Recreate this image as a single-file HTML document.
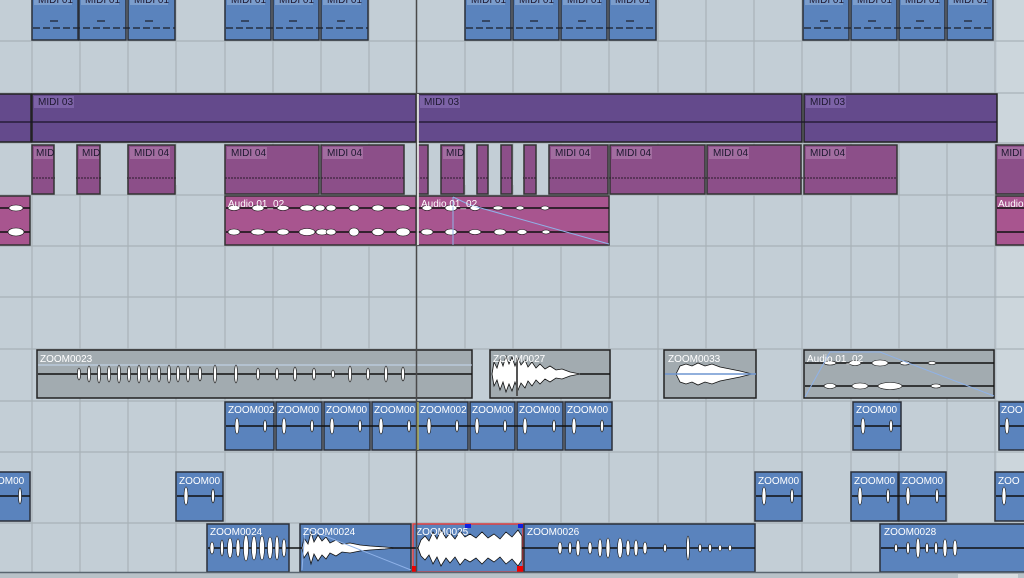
<!DOCTYPE html><html><head><meta charset="utf-8"><style>
html,body{margin:0;padding:0;background:#c3ced6;overflow:hidden}
svg{display:block}
text{font-family:"Liberation Sans",sans-serif;font-size:10px}
.b{fill:#5a83bd;stroke:#2a2f38;stroke-width:1.5}
.p3{fill:#644a8c;stroke:#222;stroke-width:1.5}
.p4{fill:#8c4f89;stroke:#333;stroke-width:1.5}
.a{fill:#a8558f;stroke:#333;stroke-width:1.5}
.g{fill:#a2abb0;stroke:#222;stroke-width:1.5}
.wl{fill:#fff;font-size:10px}
.dl{fill:#1e1830}
.ln{stroke:#111;stroke-width:1.5}
.blob{fill:#fff;stroke:#111;stroke-width:.6}
</style></head><body>
<svg width="1024" height="578" viewBox="0 0 1024 578" xmlns="http://www.w3.org/2000/svg">
<rect x="0" y="0" width="1024" height="578" fill="#c3ced6"/>
<rect x="997" y="0" width="27" height="578" fill="#ccd6dc"/>
<g stroke="#a9b2b8" stroke-width="1.2">
<line x1="32" y1="0" x2="32" y2="572"/><line x1="80" y1="0" x2="80" y2="572"/><line x1="128" y1="0" x2="128" y2="572"/><line x1="176" y1="0" x2="176" y2="572"/><line x1="225" y1="0" x2="225" y2="572"/><line x1="273" y1="0" x2="273" y2="572"/><line x1="321" y1="0" x2="321" y2="572"/><line x1="369" y1="0" x2="369" y2="572"/><line x1="465" y1="0" x2="465" y2="572"/><line x1="513" y1="0" x2="513" y2="572"/><line x1="561" y1="0" x2="561" y2="572"/><line x1="609" y1="0" x2="609" y2="572"/><line x1="658" y1="0" x2="658" y2="572"/><line x1="706" y1="0" x2="706" y2="572"/><line x1="754" y1="0" x2="754" y2="572"/><line x1="802" y1="0" x2="802" y2="572"/><line x1="851" y1="0" x2="851" y2="572"/><line x1="899" y1="0" x2="899" y2="572"/><line x1="947" y1="0" x2="947" y2="572"/><line x1="995" y1="0" x2="995" y2="572"/>
<line x1="0" y1="41" x2="1024" y2="41"/><line x1="0" y1="93" x2="1024" y2="93"/><line x1="0" y1="143" x2="1024" y2="143"/><line x1="0" y1="195" x2="1024" y2="195"/><line x1="0" y1="246" x2="1024" y2="246"/><line x1="0" y1="297" x2="1024" y2="297"/><line x1="0" y1="349" x2="1024" y2="349"/><line x1="0" y1="401" x2="1024" y2="401"/><line x1="0" y1="452" x2="1024" y2="452"/><line x1="0" y1="523" x2="1024" y2="523"/>
</g>

<!-- Row 1 MIDI 01 -->
<g>
<rect class="b" x="32" y="-2" width="46" height="42"/><rect class="b" x="79" y="-2" width="47" height="42"/><rect class="b" x="128" y="-2" width="47" height="42"/>
<rect class="b" x="225" y="-2" width="46" height="42"/><rect class="b" x="273" y="-2" width="46" height="42"/><rect class="b" x="321" y="-2" width="47" height="42"/>
<rect class="b" x="465" y="-2" width="46" height="42"/><rect class="b" x="513" y="-2" width="46" height="42"/><rect class="b" x="561" y="-2" width="46" height="42"/><rect class="b" x="609" y="-2" width="47" height="42"/>
<rect class="b" x="803" y="-2" width="46" height="42"/><rect class="b" x="851" y="-2" width="46" height="42"/><rect class="b" x="899" y="-2" width="46" height="42"/><rect class="b" x="947" y="-2" width="46" height="42"/>
<g fill="#7b9dcc"><rect x="34" y="0" width="38" height="5"/><rect x="81" y="0" width="38" height="5"/><rect x="130" y="0" width="38" height="5"/><rect x="227" y="0" width="38" height="5"/><rect x="275" y="0" width="38" height="5"/><rect x="323" y="0" width="38" height="5"/><rect x="467" y="0" width="38" height="5"/><rect x="515" y="0" width="38" height="5"/><rect x="563" y="0" width="38" height="5"/><rect x="611" y="0" width="38" height="5"/><rect x="805" y="0" width="38" height="5"/><rect x="853" y="0" width="38" height="5"/><rect x="901" y="0" width="38" height="5"/><rect x="949" y="0" width="38" height="5"/></g>
<g class="dl"><text x="38" y="3">MIDI 01</text><text x="85" y="3">MIDI 01</text><text x="134" y="3">MIDI 01</text><text x="231" y="3">MIDI 01</text><text x="279" y="3">MIDI 01</text><text x="327" y="3">MIDI 01</text><text x="471" y="3">MIDI 01</text><text x="519" y="3">MIDI 01</text><text x="567" y="3">MIDI 01</text><text x="615" y="3">MIDI 01</text><text x="809" y="3">MIDI 01</text><text x="857" y="3">MIDI 01</text><text x="905" y="3">MIDI 01</text><text x="953" y="3">MIDI 01</text></g>
<g stroke="#1a1f2a" stroke-width="1.2" stroke-dasharray="7,3">
<line x1="33" y1="28" x2="175" y2="28"/><line x1="226" y1="28" x2="368" y2="28"/><line x1="466" y1="28" x2="656" y2="28"/><line x1="804" y1="28" x2="993" y2="28"/></g>
<g stroke="#1a1f2a" stroke-width="1.2">
<line x1="50" y1="21" x2="58" y2="21"/><line x1="97" y1="21" x2="105" y2="21"/><line x1="145" y1="21" x2="153" y2="21"/><line x1="241" y1="21" x2="249" y2="21"/><line x1="289" y1="21" x2="297" y2="21"/><line x1="337" y1="21" x2="345" y2="21"/><line x1="482" y1="21" x2="490" y2="21"/><line x1="530" y1="21" x2="538" y2="21"/><line x1="578" y1="21" x2="586" y2="21"/><line x1="626" y1="21" x2="634" y2="21"/><line x1="820" y1="21" x2="828" y2="21"/><line x1="868" y1="21" x2="876" y2="21"/><line x1="916" y1="21" x2="924" y2="21"/><line x1="964" y1="21" x2="972" y2="21"/></g>
</g>

<!-- MIDI 03 row -->
<rect class="p3" x="-2" y="94" width="33" height="48"/>
<rect class="p3" x="32" y="94" width="384" height="48"/>
<rect class="p3" x="418" y="94" width="384" height="48"/>
<rect class="p3" x="804" y="94" width="193" height="48"/>
<g stroke="#1a1428" stroke-width="1.2"><line x1="0" y1="122" x2="997" y2="122"/></g>
<g fill="#7c62a6"><rect x="34" y="96" width="40" height="12"/><rect x="420" y="96" width="40" height="12"/><rect x="806" y="96" width="40" height="12"/></g>
<text class="dl" x="38" y="105">MIDI 03</text><text class="dl" x="424" y="105">MIDI 03</text><text class="dl" x="810" y="105">MIDI 03</text>

<!-- MIDI 04 row -->
<g>
<rect class="p4" x="32" y="145" width="22" height="49"/><rect class="p4" x="77" y="145" width="23" height="49"/><rect class="p4" x="128" y="145" width="47" height="49"/>
<rect class="p4" x="225" y="145" width="94" height="49"/><rect class="p4" x="321" y="145" width="83" height="49"/>
<rect class="p4" x="418" y="145" width="10" height="49"/><rect class="p4" x="441" y="145" width="23" height="49"/><rect class="p4" x="477" y="145" width="11" height="49"/><rect class="p4" x="501" y="145" width="11" height="49"/><rect class="p4" x="524" y="145" width="12" height="49"/>
<rect class="p4" x="549" y="145" width="59" height="49"/><rect class="p4" x="610" y="145" width="95" height="49"/><rect class="p4" x="707" y="145" width="94" height="49"/><rect class="p4" x="804" y="145" width="93" height="49"/><rect class="p4" x="996" y="145" width="30" height="49"/>
<g fill="#a26da0"><rect x="34" y="147" width="19" height="12"/><rect x="79" y="147" width="20" height="12"/><rect x="130" y="147" width="40" height="12"/><rect x="227" y="147" width="40" height="12"/><rect x="323" y="147" width="40" height="12"/><rect x="443" y="147" width="20" height="12"/><rect x="551" y="147" width="40" height="12"/><rect x="612" y="147" width="40" height="12"/><rect x="709" y="147" width="40" height="12"/><rect x="806" y="147" width="40" height="12"/><rect x="998" y="147" width="26" height="12"/></g>
<text class="dl" x="36" y="156">MID</text><text class="dl" x="82" y="156">MID</text><text class="dl" x="134" y="156">MIDI 04</text><text class="dl" x="231" y="156">MIDI 04</text><text class="dl" x="327" y="156">MIDI 04</text><text class="dl" x="446" y="156">MID</text><text class="dl" x="555" y="156">MIDI 04</text><text class="dl" x="616" y="156">MIDI 04</text><text class="dl" x="713" y="156">MIDI 04</text><text class="dl" x="810" y="156">MIDI 04</text><text class="dl" x="1001" y="156">MIDI</text>
<g stroke="#2a1a2a" stroke-width="1" stroke-dasharray="2,1"><line x1="33" y1="178" x2="897" y2="178"/></g>
</g>
<g fill="#c3ced6"><rect x="55" y="170" width="21" height="15"/><rect x="101" y="170" width="26" height="15"/><rect x="176" y="170" width="48" height="15"/><rect x="405" y="170" width="12" height="15"/><rect x="429" y="170" width="11" height="15"/><rect x="465" y="170" width="11" height="15"/><rect x="489" y="170" width="11" height="15"/><rect x="513" y="170" width="10" height="15"/><rect x="537" y="170" width="11" height="15"/></g>

<!-- Audio row -->
<rect class="a" x="-2" y="196" width="32" height="49"/>
<rect class="a" x="225" y="196" width="191" height="49"/>
<rect class="a" x="418" y="196" width="191" height="49"/>
<rect class="a" x="996" y="196" width="30" height="49"/>
<g class="ln"><line x1="0" y1="208" x2="30" y2="208"/><line x1="0" y1="232" x2="30" y2="232"/><line x1="226" y1="208" x2="609" y2="208"/><line x1="226" y1="232" x2="609" y2="232"/><line x1="997" y1="208" x2="1024" y2="208"/><line x1="997" y1="232" x2="1024" y2="232"/></g>
<g class="blob">
<ellipse cx="16" cy="208" rx="7" ry="3"/><ellipse cx="16" cy="232" rx="8" ry="4"/>
<ellipse cx="234" cy="208" rx="6" ry="2.5"/><ellipse cx="258" cy="208" rx="6" ry="3"/><ellipse cx="283" cy="208" rx="6" ry="2.5"/><ellipse cx="307" cy="208" rx="7" ry="3"/><ellipse cx="320" cy="208" rx="5" ry="3"/><ellipse cx="331" cy="208" rx="5" ry="3"/><ellipse cx="354" cy="208" rx="5" ry="3"/><ellipse cx="378" cy="208" rx="6" ry="3"/><ellipse cx="403" cy="208" rx="7" ry="3"/>
<ellipse cx="234" cy="232" rx="6" ry="3"/><ellipse cx="258" cy="232" rx="7" ry="3"/><ellipse cx="283" cy="232" rx="6" ry="3"/><ellipse cx="307" cy="232" rx="8" ry="3.5"/><ellipse cx="322" cy="232" rx="6" ry="3"/><ellipse cx="331" cy="232" rx="5" ry="3"/><ellipse cx="354" cy="232" rx="5" ry="4"/><ellipse cx="378" cy="232" rx="6" ry="3.5"/><ellipse cx="403" cy="232" rx="7" ry="4"/>
<ellipse cx="427" cy="208" rx="5" ry="2.5"/><ellipse cx="451" cy="208" rx="6" ry="3"/><ellipse cx="475" cy="208" rx="5" ry="2.5"/><ellipse cx="498" cy="208" rx="5" ry="2"/><ellipse cx="520" cy="208" rx="4" ry="2"/><ellipse cx="545" cy="208" rx="4" ry="2"/>
<ellipse cx="427" cy="232" rx="6" ry="3"/><ellipse cx="451" cy="232" rx="6" ry="3"/><ellipse cx="475" cy="232" rx="6" ry="2.5"/><ellipse cx="500" cy="232" rx="6" ry="3"/><ellipse cx="522" cy="232" rx="5" ry="2.5"/><ellipse cx="546" cy="232" rx="4" ry="2"/>
</g>
<polyline points="453,197 470,205 609,244" fill="none" stroke="#8fb2e8" stroke-width="1"/>
<line x1="453" y1="197" x2="453" y2="245" stroke="#8fb2e8" stroke-width="1"/>
<text class="wl" x="228" y="207">Audio 01_02</text><text class="wl" x="421" y="207">Audio 01_02</text><text class="wl" x="998" y="207">Audio</text>

<!-- Gray row -->
<rect class="g" x="37" y="350" width="435" height="48"/>
<rect class="g" x="490" y="350" width="120" height="48"/>
<rect class="g" x="664" y="350" width="92" height="48"/>
<rect class="g" x="804" y="350" width="190" height="48"/>
<line x1="38" y1="365" x2="472" y2="365" stroke="#c6d8f0" stroke-width="1"/>
<g class="ln"><line x1="38" y1="374" x2="472" y2="374"/><line x1="580" y1="374" x2="610" y2="374"/><line x1="805" y1="363" x2="994" y2="363"/><line x1="805" y1="386" x2="994" y2="386"/></g>
<g fill="#fff" stroke="#111" stroke-width=".6">
<ellipse cx="79" cy="374" rx="1.5" ry="6"/><ellipse cx="89" cy="374" rx="1.5" ry="8"/><ellipse cx="99" cy="374" rx="1.5" ry="9"/><ellipse cx="109" cy="374" rx="1.5" ry="8"/><ellipse cx="119" cy="374" rx="1.5" ry="9"/><ellipse cx="129" cy="374" rx="1.5" ry="8"/><ellipse cx="139" cy="374" rx="1.5" ry="9"/><ellipse cx="149" cy="374" rx="1.5" ry="8"/><ellipse cx="159" cy="374" rx="1.5" ry="8"/><ellipse cx="169" cy="374" rx="1.5" ry="9"/><ellipse cx="178" cy="374" rx="1.5" ry="8"/><ellipse cx="188" cy="374" rx="1.5" ry="8"/><ellipse cx="200" cy="374" rx="1.5" ry="7"/><ellipse cx="215" cy="374" rx="1.5" ry="9"/><ellipse cx="236" cy="374" rx="1.5" ry="9"/><ellipse cx="258" cy="374" rx="1.5" ry="6"/><ellipse cx="277" cy="374" rx="1.5" ry="6"/><ellipse cx="295" cy="374" rx="1.5" ry="7"/><ellipse cx="314" cy="374" rx="1.5" ry="6"/><ellipse cx="333" cy="374" rx="1.5" ry="4"/><ellipse cx="350" cy="374" rx="1.5" ry="8"/><ellipse cx="368" cy="374" rx="1.5" ry="6"/><ellipse cx="386" cy="374" rx="1.5" ry="8"/><ellipse cx="403" cy="374" rx="1.5" ry="7"/>
</g>
<path d="M492 374 L494 362 L497 368 L500 358 L503 366 L506 356 L509 364 L512 357 L515 366 L518 358 L521 365 L525 360 L528 367 L532 362 L536 368 L540 364 L545 369 L550 366 L556 370 L562 369 L570 372 L580 374 L570 376 L562 379 L556 378 L550 382 L545 379 L540 384 L536 380 L532 386 L528 381 L525 388 L521 383 L518 390 L515 382 L512 391 L509 384 L506 392 L503 382 L500 390 L497 380 L494 386 Z" fill="#fff" stroke="#111" stroke-width=".8"/>
<line x1="517" y1="358" x2="517" y2="396" stroke="#555" stroke-width="2"/>
<path d="M676 374 L680 366 L686 364 L692 366 L698 363 L705 366 L712 364 L720 367 L730 369 L740 371 L752 374 L740 377 L730 379 L720 381 L712 384 L705 382 L698 385 L692 382 L686 384 L680 382 Z" fill="#fff" stroke="#111" stroke-width=".8"/>
<line x1="665" y1="374" x2="756" y2="374" stroke="#6f96d0" stroke-width="1.5"/>
<g class="blob"><ellipse cx="830" cy="363" rx="6" ry="2"/><ellipse cx="855" cy="363" rx="6" ry="2.5"/><ellipse cx="880" cy="363" rx="8" ry="3"/><ellipse cx="905" cy="363" rx="5" ry="2"/><ellipse cx="932" cy="363" rx="4" ry="1.5"/><ellipse cx="830" cy="386" rx="6" ry="2.5"/><ellipse cx="860" cy="386" rx="8" ry="3"/><ellipse cx="890" cy="386" rx="12" ry="3.5"/><ellipse cx="936" cy="386" rx="5" ry="2"/></g>
<polyline points="805,397 830,352 880,352 994,396" fill="none" stroke="#8fb2e8" stroke-width="1"/>
<text class="wl" x="40" y="362">ZOOM0023</text><text class="wl" x="493" y="362">ZOOM0027</text><text class="wl" x="668" y="362">ZOOM0033</text><text class="wl" x="807" y="362">Audio 01_02</text>

<!-- Blue row 401 -->
<g>
<rect class="b" x="225" y="402" width="49" height="48"/><rect class="b" x="276" y="402" width="46" height="48"/><rect class="b" x="324" y="402" width="46" height="48"/><rect class="b" x="372" y="402" width="45" height="48"/><rect class="b" x="418" y="402" width="50" height="48"/><rect class="b" x="470" y="402" width="45" height="48"/><rect class="b" x="517" y="402" width="46" height="48"/><rect class="b" x="565" y="402" width="47" height="48"/><rect class="b" x="853" y="402" width="48" height="48"/><rect class="b" x="999" y="402" width="27" height="48"/>
<g class="ln"><line x1="226" y1="426" x2="612" y2="426"/><line x1="854" y1="426" x2="901" y2="426"/><line x1="1000" y1="426" x2="1024" y2="426"/></g>
<g fill="#fff" stroke="#111" stroke-width=".6">
<ellipse cx="237" cy="426" rx="2" ry="8"/><ellipse cx="265" cy="426" rx="1.5" ry="6"/><ellipse cx="284" cy="426" rx="2" ry="8"/><ellipse cx="312" cy="426" rx="1.5" ry="6"/><ellipse cx="332" cy="426" rx="2" ry="8"/><ellipse cx="360" cy="426" rx="1.5" ry="6"/><ellipse cx="381" cy="426" rx="2" ry="8"/><ellipse cx="409" cy="426" rx="1.5" ry="6"/><ellipse cx="429" cy="426" rx="2" ry="8"/><ellipse cx="457" cy="426" rx="1.5" ry="6"/><ellipse cx="477" cy="426" rx="2" ry="8"/><ellipse cx="505" cy="426" rx="1.5" ry="6"/><ellipse cx="525" cy="426" rx="2" ry="8"/><ellipse cx="554" cy="426" rx="1.5" ry="6"/><ellipse cx="574" cy="426" rx="2" ry="8"/><ellipse cx="602" cy="426" rx="1.5" ry="6"/><ellipse cx="863" cy="426" rx="2" ry="8"/><ellipse cx="891" cy="426" rx="1.5" ry="6"/><ellipse cx="1007" cy="426" rx="2" ry="8"/>
</g>
<text class="wl" x="228" y="413">ZOOM002</text><text class="wl" x="278" y="413">ZOOM00</text><text class="wl" x="326" y="413">ZOOM00</text><text class="wl" x="374" y="413">ZOOM00</text><text class="wl" x="420" y="413">ZOOM002</text><text class="wl" x="472" y="413">ZOOM00</text><text class="wl" x="519" y="413">ZOOM00</text><text class="wl" x="567" y="413">ZOOM00</text><text class="wl" x="856" y="413">ZOOM00</text><text class="wl" x="1001" y="413">ZOO</text>
</g>

<!-- Blue row 472 -->
<g>
<rect class="b" x="-2" y="472" width="32" height="49"/><rect class="b" x="176" y="472" width="47" height="49"/><rect class="b" x="755" y="472" width="47" height="49"/><rect class="b" x="851" y="472" width="47" height="49"/><rect class="b" x="899" y="472" width="47" height="49"/><rect class="b" x="995" y="472" width="31" height="49"/>
<g class="ln"><line x1="0" y1="496" x2="30" y2="496"/><line x1="177" y1="496" x2="223" y2="496"/><line x1="756" y1="496" x2="802" y2="496"/><line x1="852" y1="496" x2="946" y2="496"/><line x1="996" y1="496" x2="1024" y2="496"/></g>
<g fill="#fff" stroke="#111" stroke-width=".6">
<ellipse cx="20" cy="496" rx="1.5" ry="8"/><ellipse cx="186" cy="496" rx="2" ry="9"/><ellipse cx="213" cy="496" rx="1.5" ry="7"/><ellipse cx="764" cy="496" rx="2" ry="9"/><ellipse cx="792" cy="496" rx="1.5" ry="7"/><ellipse cx="860" cy="496" rx="2" ry="9"/><ellipse cx="888" cy="496" rx="1.5" ry="7"/><ellipse cx="908" cy="496" rx="2" ry="9"/><ellipse cx="937" cy="496" rx="1.5" ry="7"/><ellipse cx="1004" cy="496" rx="2" ry="9"/>
</g>
<text class="wl" x="-3" y="484">OM00</text><text class="wl" x="179" y="484">ZOOM00</text><text class="wl" x="758" y="484">ZOOM00</text><text class="wl" x="854" y="484">ZOOM00</text><text class="wl" x="902" y="484">ZOOM00</text><text class="wl" x="998" y="484">ZOO</text>
</g>

<!-- Bottom row 523 -->
<g>
<rect class="b" x="207" y="524" width="82" height="48"/><rect class="b" x="300" y="524" width="111" height="48"/><rect class="b" x="413" y="524" width="110" height="48" style="stroke:#e04040"/><rect class="b" x="524" y="524" width="231" height="48"/><rect class="b" x="880" y="524" width="146" height="48"/>
<g class="ln"><line x1="208" y1="548" x2="755" y2="548"/><line x1="881" y1="548" x2="1024" y2="548"/></g>
<g fill="#fff" stroke="#111" stroke-width=".6">
<ellipse cx="212" cy="548" rx="2" ry="6"/><ellipse cx="222" cy="548" rx="1.5" ry="8"/><ellipse cx="230" cy="548" rx="2.5" ry="10"/><ellipse cx="238" cy="548" rx="2" ry="9"/><ellipse cx="246" cy="548" rx="2.5" ry="13"/><ellipse cx="254" cy="548" rx="2.5" ry="12"/><ellipse cx="262" cy="548" rx="2.5" ry="12"/><ellipse cx="270" cy="548" rx="2.5" ry="11"/><ellipse cx="277" cy="548" rx="2" ry="12"/><ellipse cx="284" cy="548" rx="2" ry="9"/>
<ellipse cx="560" cy="548" rx="2" ry="6"/><ellipse cx="570" cy="548" rx="1.5" ry="6"/><ellipse cx="578" cy="548" rx="2" ry="8"/><ellipse cx="590" cy="548" rx="2" ry="6"/><ellipse cx="600" cy="548" rx="2" ry="9"/><ellipse cx="608" cy="548" rx="2" ry="10"/><ellipse cx="620" cy="548" rx="2.5" ry="10"/><ellipse cx="628" cy="548" rx="2" ry="8"/><ellipse cx="636" cy="548" rx="2" ry="8"/><ellipse cx="645" cy="548" rx="2" ry="6"/><ellipse cx="665" cy="548" rx="1.5" ry="4"/><ellipse cx="688" cy="548" rx="1.5" ry="12"/><ellipse cx="700" cy="548" rx="1.5" ry="4"/><ellipse cx="710" cy="548" rx="1.5" ry="4"/><ellipse cx="720" cy="548" rx="1.5" ry="3"/><ellipse cx="730" cy="548" rx="1.5" ry="3"/>
<ellipse cx="896" cy="548" rx="1.5" ry="4"/><ellipse cx="908" cy="548" rx="1.5" ry="6"/><ellipse cx="918" cy="548" rx="2" ry="10"/><ellipse cx="927" cy="548" rx="1.5" ry="5"/><ellipse cx="936" cy="548" rx="1.5" ry="6"/><ellipse cx="945" cy="548" rx="2" ry="9"/><ellipse cx="955" cy="548" rx="2" ry="8"/>
</g>
<path d="M302 548 L304 538 L308 544 L311 532 L314 542 L318 535 L322 541 L326 537 L330 543 L336 540 L342 544 L350 543 L360 545 L370 546 L385 547 L395 548 L385 549 L370 550 L360 551 L350 553 L342 552 L336 556 L330 553 L326 559 L322 555 L318 561 L314 554 L311 564 L308 552 L304 558 Z" fill="#fff" stroke="#111" stroke-width=".8"/>
<path d="M418 548 L421 540 L425 536 L429 541 L433 532 L437 539 L441 530 L446 538 L450 533 L455 539 L460 531 L465 537 L470 534 L476 538 L482 532 L488 538 L494 534 L500 539 L506 532 L512 537 L518 530 L522 536 L522 560 L518 566 L512 559 L506 564 L500 557 L494 562 L488 558 L482 564 L476 558 L470 562 L465 559 L460 565 L455 557 L450 563 L446 558 L441 566 L437 557 L433 564 L429 555 L425 560 L421 556 Z" fill="#fff" stroke="#111" stroke-width=".8"/>
<polyline points="302,570 305,528 411,570" fill="none" stroke="#8fb2e8" stroke-width="1"/>
<rect x="412" y="566" width="5" height="6" fill="#e00"/><rect x="517" y="566" width="6" height="6" fill="#e00"/>
<rect x="465" y="524" width="6" height="4" fill="#1020e0"/><rect x="518" y="524" width="5" height="4" fill="#1020e0"/>
<text class="wl" x="210" y="535">ZOOM0024</text><text class="wl" x="303" y="535">ZOOM0024</text><text class="wl" x="416" y="535">ZOOM0025</text><text class="wl" x="527" y="535">ZOOM0026</text><text class="wl" x="884" y="535">ZOOM0028</text>
</g>

<!-- playhead -->
<line x1="416.5" y1="0" x2="416.5" y2="572" stroke="#4a4a4a" stroke-width="1.5"/>
<line x1="418" y1="94" x2="418" y2="245" stroke="#fff" stroke-width="1.5"/>
<line x1="418" y1="402" x2="418" y2="450" stroke="#f0f070" stroke-width="1"/>

<!-- bottom bar -->
<rect x="0" y="572" width="1024" height="6" fill="#b8c2c8"/>
<line x1="0" y1="572.5" x2="1024" y2="572.5" stroke="#5a6670" stroke-width="1.5"/>
<rect x="958" y="574" width="60" height="4" fill="#d8dde0"/>
</svg>
</body></html>
